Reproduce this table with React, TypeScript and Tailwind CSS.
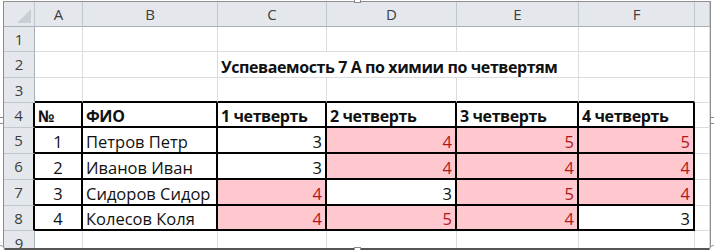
import React from 'react';

// Cells that belong to the bordered grade table (rows 4..8, columns A..F)
const inTable = (r: number, c: number) => r >= 4 && r <= 8 && c >= 1 && c <= 6;

const COLS = ['A', 'B', 'C', 'D', 'E', 'F', ''];

type Val = string | number;

const HEAD: Val[] = ['№', 'ФИО', '1 четверть', '2 четверть', '3 четверть', '4 четверть'];

const STUDENTS: Val[][] = [
  [1, 'Петров Петр', 3, 4, 5, 5],
  [2, 'Иванов Иван', 3, 4, 4, 4],
  [3, 'Сидоров Сидор', 4, 3, 5, 4],
  [4, 'Колесов Коля', 4, 5, 4, 3],
];

function Handle({ className }: { className: string }) {
  return <div className={`absolute w-[7px] h-[7px] bg-white border border-[#8a8a8a] ${className}`} />;
}

function rowContent(r: number): Val[] {
  if (r === 4) return HEAD;
  if (r >= 5 && r <= 8) return STUDENTS[r - 5];
  return [];
}

export default function App() {
  const rows = [1, 2, 3, 4, 5, 6, 7, 8, 9];

  return (
    <div
      className="relative w-[714px] h-[250px] bg-white overflow-hidden pl-[3px] pr-[3px] pt-[1px]"
      style={{ fontFamily: '"Open Sans", "Noto Sans", sans-serif' }}
    >
      <div className="h-[249px] overflow-hidden border-l border-t border-r border-[#8e8e8e] border-b-2 border-b-[#555]">
        <div className="grid grid-cols-[31px_48px_135px_109px_130px_122px_116px_15px] grid-rows-[25px_25px_26px_25px_25px_26px_26px_26px_25px_25px] text-[16.5px]">
          {/* corner */}
          <div className="relative bg-[#e4e8ed] border-r border-b border-r-[#c2c7ce] border-b-[#a9b0b9]">
            <svg className="absolute right-[3px] bottom-[3px]" width="14" height="14" viewBox="0 0 14 14">
              <polygon points="14,0 14,14 0,14" fill="#c9ced5" />
            </svg>
          </div>
          {COLS.map((l, i) => (
            <div
              key={`h${i}`}
              className="flex items-center justify-center bg-[#e4e8ed] border-r border-b border-r-[#c2c7ce] border-b-[#a9b0b9] text-[#3d3d3d] text-[15px]"
            >
              {l}
            </div>
          ))}

          {rows.map((r) => {
            const vals = rowContent(r);
            const cells: React.ReactNode[] = [];
            cells.push(
              <div
                key={`rh${r}`}
                className={`flex items-center justify-center bg-[#e4e8ed] border-b border-b-[#c2c7ce] text-[#3d3d3d] text-[15px] ${
                  inTable(r, 1) ? 'border-r-2 border-r-black' : 'border-r border-r-[#a9b0b9]'
                }`}
              >
                {r}
              </div>
            );
            for (let c = 1; c <= 7; c++) {
              if (r === 2 && c === 3) {
                // title overflows across C:E, so no gridlines inside it
                cells.push(
                  <div
                    key={`c${r}-${c}`}
                    className="col-span-3 flex items-end pl-[3px] font-bold text-[16px] tracking-[-0.4px] whitespace-nowrap leading-[20px] text-[#111] border-r border-b border-[#dadcdd]"
                  >
                    Успеваемость 7 А по химии по четвертям
                  </div>
                );
                c += 2;
                continue;
              }
              const v = c <= 6 ? vals[c - 1] : undefined;
              const right = inTable(r, c) || inTable(r, c + 1) ? 'border-r-2 border-r-black' : 'border-r border-r-[#dadcdd]';
              const bottom = inTable(r, c) || inTable(r + 1, c) ? 'border-b-2 border-b-black' : 'border-b border-b-[#dadcdd]';
              const grade = r >= 5 && r <= 8 && c >= 3 && c <= 6;
              const bad = grade && Number(v) >= 4;
              let align = 'justify-start pl-[3px]';
              if (r >= 5 && c === 1) align = 'justify-center';
              if (grade) align = 'justify-end pr-[3px]';
              cells.push(
                <div
                  key={`c${r}-${c}`}
                  className={`flex items-end leading-[20px] whitespace-nowrap ${right} ${bottom} ${align} ${
                    bad ? 'bg-[#ffc7ce] text-[#b01820]' : 'text-[#111]'
                  } ${r === 4 ? 'font-bold text-[16px] tracking-[-0.4px]' : ''}`}
                >
                  {v}
                </div>
              );
            }
            return cells;
          })}
        </div>
      </div>

      {/* picture selection handles */}
      <Handle className="left-[-3px] top-[117px]" />
      <Handle className="right-[-3px] top-[117px]" />
      <Handle className="left-[354px] top-[-4px]" />
      <Handle className="left-[354px] bottom-[-4px]" />
      <div className="absolute left-[-4px] bottom-[-4px] w-[9px] h-[9px] rounded-full bg-white border border-[#8a8a8a]" />
      <div className="absolute right-[-4px] bottom-[-4px] w-[9px] h-[9px] rounded-full bg-white border border-[#8a8a8a]" />
    </div>
  );
}
